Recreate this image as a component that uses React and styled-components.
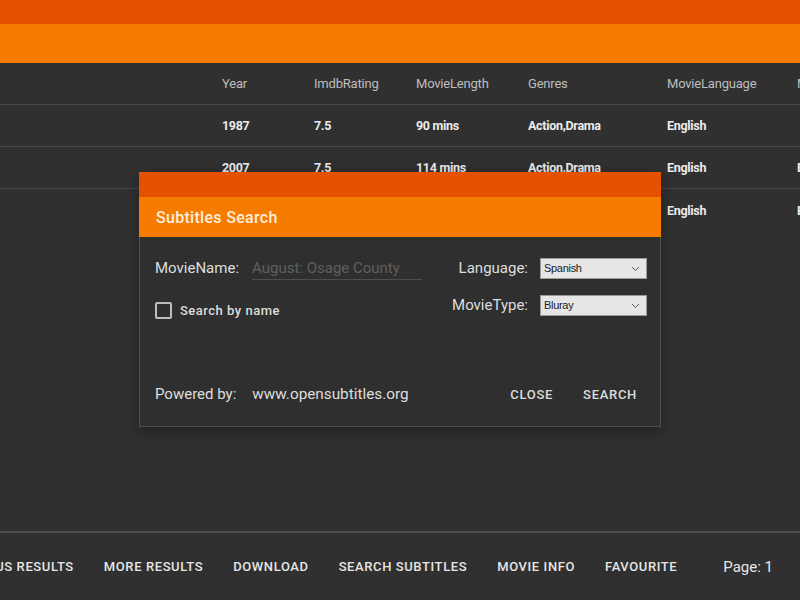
import React from 'react';
import styled, { createGlobalStyle } from 'styled-components';

const GlobalStyle = createGlobalStyle`
    html, body {
        margin: 0;
        padding: 0;
        background: #303030;
        overflow: hidden;
    }
    * {
        box-sizing: border-box;
    }
`;

const Page = styled.div`
    position: relative;
    width: 800px;
    height: 600px;
    display: flex;
    flex-direction: column;
    background: #303030;
    font-family: Roboto, 'Liberation Sans', sans-serif;
    overflow: hidden;
`;

const TopStrip = styled.div`
    height: 24px;
    background: #e65100;
    flex-shrink: 0;
`;

const Toolbar = styled.div`
    height: 39px;
    background: #f57c00;
    flex-shrink: 0;
`;

const Table = styled.div`
    display: grid;
    grid-template-columns: 222px 92px 102px 112px 139px 130px 100px;
    width: 897px;
`;

const Cell = styled.div`
    height: 42px;
    display: flex;
    align-items: center;
    border-bottom: ${(p) => (p.$last ? 'none' : '1px solid #4a4a4a')};
    font-size: ${(p) => (p.$head ? '13px' : '12.5px')};
    font-weight: ${(p) => (p.$head ? 400 : 700)};
    letter-spacing: ${(p) => (p.$head ? '-0.2px' : '-0.3px')};
    color: ${(p) => (p.$head ? '#bdbdbd' : '#ececec')};
    white-space: nowrap;
`;

const Spacer = styled.div`
    flex: 1;
`;

const Footer = styled.div`
    height: 69px;
    border-top: 2px solid #4d4d4d;
    display: flex;
    align-items: center;
    justify-content: flex-end;
    padding-right: 27px;
    flex-shrink: 0;
`;

const FooterButton = styled.button`
    background: none;
    border: none;
    padding: 0;
    margin-right: 30px;
    font-family: Roboto, 'Liberation Sans', sans-serif;
    font-size: 13px;
    font-weight: 500;
    letter-spacing: 0.6px;
    color: #e6e6e6;
    text-transform: uppercase;
    white-space: nowrap;
    flex-shrink: 0;
`;

const PageLabel = styled.span`
    margin-left: 16px;
    font-size: 15px;
    color: #e6e6e6;
    white-space: nowrap;
`;

const Dialog = styled.div`
    position: absolute;
    left: 139px;
    top: 172px;
    width: 522px;
    height: 255px;
    display: flex;
    flex-direction: column;
    background: #2f2f2f;
    border: 1px solid #4e4e4e;
    border-top: none;
    box-shadow: 0 4px 14px rgba(0, 0, 0, 0.35);
`;

const DialogStrip = styled.div`
    height: 25px;
    margin: 0 -1px;
    background: #e65100;
`;

const DialogTitle = styled.div`
    height: 40px;
    margin: 0 -1px;
    padding-left: 17px;
    display: flex;
    align-items: center;
    background: #f57c00;
    color: #ffeedd;
    font-size: 16px;
    font-weight: 500;
    letter-spacing: 0.3px;
`;

const DialogBody = styled.div`
    flex: 1;
    display: flex;
    flex-direction: column;
    padding: 13px 13px 0 15px;
`;

const FormRow = styled.div`
    display: flex;
    align-items: center;
    justify-content: space-between;
    height: ${(p) => p.$h || '36px'};
`;

const Group = styled.div`
    display: flex;
    align-items: center;
    padding-top: ${(p) => p.$drop || '0'};
`;

const Label = styled.label`
    font-size: 15px;
    color: #dedede;
    margin-right: ${(p) => p.$gap || '12px'};
    white-space: nowrap;
`;

const NameInput = styled.input`
    width: 170px;
    height: 24px;
    background: transparent;
    border: none;
    border-bottom: 1px solid #4d4d4d;
    padding: 0;
    font-family: Roboto, 'Liberation Sans', sans-serif;
    font-size: 15px;
    color: #dedede;
    outline: none;
    &::placeholder {
        color: #5f5f5f;
    }
`;

const SelectBox = styled.div`
    position: relative;
    width: 107px;
    height: 21px;
    background: #e6e6e6;
    border: 1px solid #9a9a9a;
    display: flex;
    align-items: center;
    padding-left: 3px;
    font-family: 'Liberation Sans', Arial, sans-serif;
    font-size: 11px;
    letter-spacing: -0.3px;
    color: #222;
`;

const Chevron = styled.svg`
    position: absolute;
    right: 6px;
    top: 7px;
`;

const CheckBox = styled.span`
    width: 17px;
    height: 17px;
    border: 2px solid #bdbdbd;
    border-radius: 2px;
    margin-right: 8px;
`;

const CheckLabel = styled.span`
    font-size: 13px;
    font-weight: 500;
    letter-spacing: 0.5px;
    color: #dcdcdc;
`;

const DialogFooter = styled.div`
    margin-top: auto;
    height: 70px;
    display: flex;
    align-items: center;
    padding-top: 6px;
`;

const Link = styled.span`
    font-size: 15.3px;
    color: #dedede;
`;

const ActionButton = styled.button`
    background: none;
    border: none;
    padding: 0;
    margin-left: ${(p) => p.$ml || '30px'};
    font-family: Roboto, 'Liberation Sans', sans-serif;
    font-size: 13px;
    font-weight: 500;
    letter-spacing: 0.7px;
    color: #dcdcdc;
`;

const headers = ['', 'Year', 'ImdbRating', 'MovieLength', 'Genres', 'MovieLanguage', 'MovieType'];
const rows = [
    ['', '1987', '7.5', '90 mins', 'Action,Drama', 'English', ''],
    ['', '2007', '7.5', '114 mins', 'Action,Drama', 'English', 'Bluray'],
    ['', '2013', '7.2', '121 mins', 'Drama', 'English', 'Bluray'],
];

function Select({ value }) {
    return (
        <SelectBox>
            {value}
            <Chevron width="9" height="6" viewBox="0 0 9 6">
                <path d="M1 1l3.5 3.5L8 1" fill="none" stroke="#555" strokeWidth="1" />
            </Chevron>
        </SelectBox>
    );
}

function App() {
    return (
        <Page>
            <GlobalStyle />
            <TopStrip />
            <Toolbar />
            <Table>
                {headers.map((h, i) => (
                    <Cell key={'h' + i} $head>
                        {h}
                    </Cell>
                ))}
                {rows.map((r, ri) =>
                    r.map((c, ci) => (
                        <Cell key={ri + '-' + ci} $last={ri === rows.length - 1}>
                            {c}
                        </Cell>
                    ))
                )}
            </Table>
            <Spacer />
            <Footer>
                <FooterButton>Previous Results</FooterButton>
                <FooterButton>More Results</FooterButton>
                <FooterButton>Download</FooterButton>
                <FooterButton>Search Subtitles</FooterButton>
                <FooterButton>Movie Info</FooterButton>
                <FooterButton>Favourite</FooterButton>
                <PageLabel>Page: 1</PageLabel>
            </Footer>

            <Dialog>
                <DialogStrip />
                <DialogTitle>Subtitles Search</DialogTitle>
                <DialogBody>
                    <FormRow>
                        <Group>
                            <Label $gap="13px">MovieName:</Label>
                            <NameInput placeholder="August: Osage County" />
                        </Group>
                        <Group>
                            <Label>Language:</Label>
                            <Select value="Spanish" />
                        </Group>
                    </FormRow>
                    <FormRow $h="38px">
                        <Group $drop="10px">
                            <CheckBox />
                            <CheckLabel>Search by name</CheckLabel>
                        </Group>
                        <Group>
                            <Label>MovieType:</Label>
                            <Select value="Bluray" />
                        </Group>
                    </FormRow>
                    <DialogFooter>
                        <Label $gap="16px">Powered by:</Label>
                        <Link>www.opensubtitles.org</Link>
                        <ActionButton $ml="auto">CLOSE</ActionButton>
                        <ActionButton>SEARCH</ActionButton>
                        <span style={{ width: 10 }} />
                    </DialogFooter>
                </DialogBody>
            </Dialog>
        </Page>
    );
}

export default App;
